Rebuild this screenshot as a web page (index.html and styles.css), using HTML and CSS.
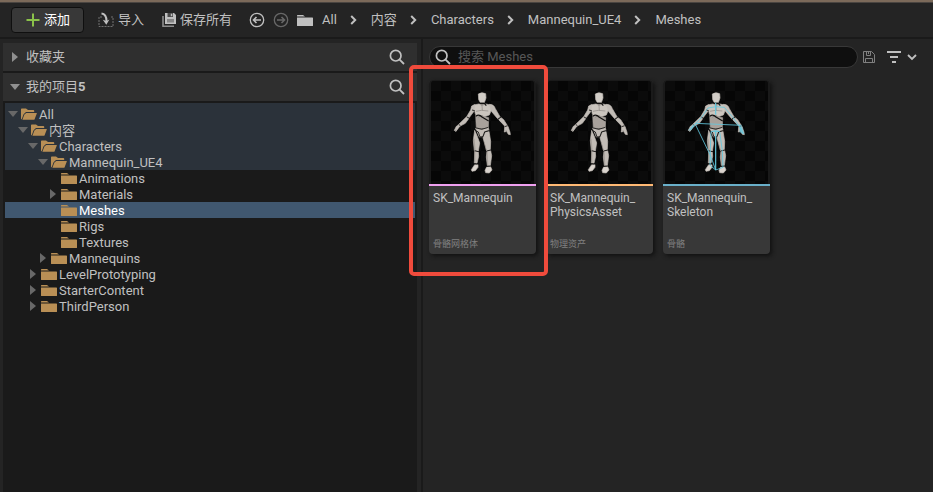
FILE: index.html
```html
<!DOCTYPE html>
<html lang="zh-CN">
<head>
<meta charset="utf-8">
<meta name="viewport" content="width=device-width, initial-scale=1">
<title>Meshes</title>
<link rel="stylesheet" href="styles.css">
</head>
<body>
<svg class="defs" aria-hidden="true">
  <defs>
    <symbol id="folder" viewBox="0 0 16 12"><path d="M0 1.5Q0 1 .6 1H6L8 2.4H0zM0 3.4H15.4Q16 3.4 16 4V11.4Q16 12 15.4 12H.6Q0 12 0 11.4z"/></symbol>
    <symbol id="folder-open" viewBox="0 0 16 12"><path d="M0 1.2Q0 .4.8.4H5L7 2H12.4Q13.2 2 13.2 2.8V4H5L2.6 6.2L.6 11.4Q0 11 0 10.4z"/><path d="M5.3 5H15.6Q16 5 15.8 5.5L13.6 11.3Q13.4 11.8 12.8 11.8H1.4L3.4 6.6z"/></symbol>
    <symbol id="right" viewBox="0 0 10 10"><path d="M2 0L8 5L2 10z"/></symbol>
    <symbol id="down" viewBox="0 0 10 10"><path d="M0 2H10L5 8z"/></symbol>
    <symbol id="chevron" viewBox="0 0 7 10"><path d="M1.2 1L5.2 5L1.2 9" fill="none" stroke="currentColor" stroke-width="2"/></symbol>
    <symbol id="search" viewBox="0 0 16 16"><circle cx="6.7" cy="6.7" r="5.3" fill="none" stroke="currentColor" stroke-width="1.7"/><path d="M10.6 10.6L15 15" stroke="currentColor" stroke-width="1.8"/></symbol>
    <symbol id="arrow-circle" viewBox="0 0 16 16"><g fill="none" stroke="currentColor"><circle cx="8" cy="8" r="6.7" stroke-width="1.3"/><path d="M12 8H5M7.5 5L4.5 8L7.5 11" stroke-width="1.6"/></g></symbol>
    <symbol id="mannequin" viewBox="18 3 309 309">
      <g fill="#c2bcb6" stroke="#c2bcb6" stroke-width="2" stroke-linejoin="round">
        <path fill="#d2cdc7" d="M160 42Q170 35 182 41L183 54L178 68H165L161 58z"/>
        <path fill="#8b8580" stroke="none" d="M164 68H179L184 76H160z"/>
        <path fill="#cbc5be" d="M146 75L161 72L171 77L183 72L196 75L200 88L193 105L178 110L171 106L158 110L151 102L149 91L141 88z"/>
        <path fill="#a8a19b" stroke="#a8a19b" d="M152 105L160 112L171 108L191 113L190 143L172 145L154 143L153 127z"/>
        <path d="M149 74L140 78L137 90L124 112L131 115L147 94zM193 73Q207 73 211 86L225 110L218 116L199 94z"/>
        <path d="M123 112L131 116L121 130L104 139L100 134zM226 111L236 119L248 138L241 140L221 119z"/>
        <path d="M102 134L94 139L88 151L90 153L94 147L92 155L99 146L105 138zM239 139L238 156L241 156L243 151L250 163L256 164L255 157L249 139z"/>
        <path d="M151 144L171 148L190 143L192 151L178 154L172 170L163 171L156 154z"/>
        <path d="M149 151L158 172L164 189L160 213L148 212L145 181zM192 154L180 157L174 173L180 195L185 213L196 209L197 184z"/>
        <path d="M149 214L160 216L161 229L156 250L148 249zM186 214L197 212L200 227L196 257L187 257L184 231z"/>
        <path fill="#dad4ce" d="M149 254L159 254L159 262L151 272L141 274L139 269zM185 261L197 260L201 270L193 279L182 278L180 271z"/>
      </g>
      <path fill="#8a837d" opacity=".45" d="M144 171L149 178L152 212H148zM174 176L181 194L186 212L182 209zM147 215L151 216L151 250H148zM184 215L188 216L190 257H187z"/>
      <g fill="none" stroke="#11100f" stroke-width="2.5">
        <path stroke-width="3.5" d="M160 64L165 70H178L184 77M152 109Q162 101 171 111L191 123"/>
        <path d="M150 143L170 148L190 142M151 151L160 156L165 171L174 170L179 156L192 152M149 212L160 215M148 251L158 252M185 213L197 210M185 259L197 258M126 111L134 115M220 117L229 111M101 133L106 137M239 140L248 137M149 92L141 90"/>
        <path stroke="#77716c" stroke-width="1.5" d="M153 94L169 91L190 93M171 77L172 91"/>
      </g>
    </symbol>
  </defs>
</svg>

<div class="browser">
  <header class="toolbar">
    <button class="tool add" type="button">
      <svg width="14" height="14" viewBox="0 0 14 14" aria-hidden="true"><path d="M7 .5V13.5M.5 7H13.5" stroke="#8bc24a" stroke-width="2"/></svg>添加
    </button>
    <button class="tool import" type="button">
      <svg width="16" height="16" viewBox="0 0 16 16" aria-hidden="true"><path d="M4 5H1V14.5H15V5H12.5" fill="none" stroke="#707070" stroke-width="1" stroke-dasharray="2 1"/><path d="M3.5 1.4Q8.5 2 8.5 9" fill="none" stroke="currentColor" stroke-width="2"/><path d="M4.8 7.8L8.5 9L11.4 7.4L8.3 12.8z" fill="currentColor"/></svg>导入
    </button>
    <button class="tool save" type="button">
      <svg width="14" height="14" viewBox="0 0 14 14" aria-hidden="true"><path d="M1 3V13.2H12" fill="none" stroke="#8c8c8c" stroke-width="1.6"/><path d="M3 0H12L14 2V11H3z" fill="currentColor"/><path d="M5.5 0H11V4H5.5zM5 6.5H12V7.5H5zM5 8.5H12V9.2H5z" fill="#4a4a4a"/><path d="M8.8.7H10.3V3.2H8.8z" fill="currentColor"/></svg>保存所有
    </button>
    <nav class="crumbs" aria-label="路径">
      <button class="icon" type="button" aria-label="后退"><svg width="16" height="16"><use href="#arrow-circle"/></svg></button>
      <button class="icon forward" type="button" aria-label="前进" disabled><svg width="16" height="16"><use href="#arrow-circle"/></svg></button>
      <svg class="solid root" width="16" height="12" aria-hidden="true"><use href="#folder"/></svg>
      <a href="#">All</a><svg class="sep" width="7" height="10"><use href="#chevron"/></svg>
      <a href="#">内容</a><svg class="sep" width="7" height="10"><use href="#chevron"/></svg>
      <a href="#">Characters</a><svg class="sep" width="7" height="10"><use href="#chevron"/></svg>
      <a href="#">Mannequin_UE4</a><svg class="sep" width="7" height="10"><use href="#chevron"/></svg>
      <a href="#">Meshes</a>
    </nav>
  </header>

  <div class="body">
    <aside class="sources">
      <div class="section">
        <button class="toggle" type="button" aria-expanded="false"><svg class="solid" width="10" height="10"><use href="#right"/></svg>收藏夹</button>
        <button class="icon" type="button" aria-label="搜索收藏夹"><svg width="16" height="16"><use href="#search"/></svg></button>
      </div>
      <div class="section">
        <button class="toggle" type="button" aria-expanded="true"><svg class="solid" width="10" height="10"><use href="#down"/></svg><span>我的项目<b>5</b></span></button>
        <button class="icon" type="button" aria-label="搜索项目"><svg width="16" height="16"><use href="#search"/></svg></button>
      </div>
      <ul class="tree">
        <li class="row l0 path first"><svg class="arrow"><use href="#down"/></svg><svg class="dir"><use href="#folder-open"/></svg><span>All</span></li>
        <li class="row l1 path"><svg class="arrow"><use href="#down"/></svg><svg class="dir"><use href="#folder-open"/></svg><span>内容</span></li>
        <li class="row l2 path"><svg class="arrow"><use href="#down"/></svg><svg class="dir"><use href="#folder-open"/></svg><span>Characters</span></li>
        <li class="row l3 path"><svg class="arrow"><use href="#down"/></svg><svg class="dir"><use href="#folder-open"/></svg><span>Mannequin_UE4</span></li>
        <li class="row l4"><svg class="arrow"></svg><svg class="dir"><use href="#folder"/></svg><span>Animations</span></li>
        <li class="row l4"><svg class="arrow"><use href="#right"/></svg><svg class="dir"><use href="#folder"/></svg><span>Materials</span></li>
        <li class="row l4 selected"><svg class="arrow"></svg><svg class="dir"><use href="#folder"/></svg><span>Meshes</span></li>
        <li class="row l4"><svg class="arrow"></svg><svg class="dir"><use href="#folder"/></svg><span>Rigs</span></li>
        <li class="row l4"><svg class="arrow"></svg><svg class="dir"><use href="#folder"/></svg><span>Textures</span></li>
        <li class="row l3"><svg class="arrow"><use href="#right"/></svg><svg class="dir"><use href="#folder"/></svg><span>Mannequins</span></li>
        <li class="row l2"><svg class="arrow"><use href="#right"/></svg><svg class="dir"><use href="#folder"/></svg><span>LevelPrototyping</span></li>
        <li class="row l2"><svg class="arrow"><use href="#right"/></svg><svg class="dir"><use href="#folder"/></svg><span>StarterContent</span></li>
        <li class="row l2"><svg class="arrow"><use href="#right"/></svg><svg class="dir"><use href="#folder"/></svg><span>ThirdPerson</span></li>
      </ul>
    </aside>

    <main class="content">
      <div class="filters">
        <label class="search"><svg width="16" height="16" aria-hidden="true"><use href="#search"/></svg><input type="text" placeholder="搜索 Meshes" aria-label="搜索 Meshes"></label>
        <button class="icon save-search" type="button" aria-label="保存搜索"><svg width="12" height="12" viewBox="0 0 12 12"><path d="M.5.5H8.5L11.5 3.5V11.5H.5zM3.5.5V4.5H7.5V.5M2.5 11.5V7.5H9.5V11.5M5.5 1V3" fill="none" stroke="currentColor" stroke-width="1"/></svg></button>
        <button class="icon filter" type="button" aria-label="过滤器"><svg width="14" height="12" viewBox="0 0 14 12"><path d="M0 1H14M3 6H11M5 11H9" stroke="currentColor" stroke-width="2"/></svg><svg width="10" height="7" viewBox="0 0 10 7"><path d="M1 1L5 5L9 1" fill="none" stroke="currentColor" stroke-width="1.8"/></svg></button>
      </div>
      <div class="assets">
        <article class="card mesh">
          <svg class="thumb" viewBox="0 0 309 309"><use href="#mannequin"/></svg>
          <div class="info"><h2>SK_Mannequin</h2><p>骨骼网格体</p></div>
          <span class="highlight"></span>
        </article>
        <article class="card physics">
          <svg class="thumb" viewBox="0 0 309 309"><use href="#mannequin"/></svg>
          <div class="info"><h2>SK_Mannequin_<wbr>PhysicsAsset</h2><p>物理资产</p></div>
        </article>
        <article class="card skeleton">
          <svg class="thumb" viewBox="18 3 309 309"><use href="#mannequin" x="18" y="3" width="309" height="309"/>
            <g fill="none" stroke="#62c8df" stroke-width="2.5"><path stroke-width="3.5" d="M170 154V270M170 68V104"/><path d="M109 130L248 136M109 133L155 228L170 270M171 80L147 84L128 112L104 137L94 151M171 80L196 82L222 113L243 141L253 162M243 141L244 158M170 152L156 155L154 210L153 256L170 270L192 262L190 212L182 155L170 152M162 154H180"/></g>
            <path fill="#62c8df" opacity=".6" d="M103 133L87 151L94 151L107 139zM240 139L249 139L256 163L247 160z"/>
          </svg>
          <div class="info"><h2>SK_Mannequin_<wbr>Skeleton</h2><p>骨骼</p></div>
        </article>
      </div>
    </main>
  </div>
</div>
</body>
</html>
```
FILE: styles.css
```css
* { box-sizing: border-box; }

body {
  margin: 0;
  background: #242424;
  color: #c0c0c0;
  font: 13px/16px Roboto, "Noto Sans CJK SC", sans-serif;
}

button, input { font: inherit; color: inherit; }

button {
  display: flex;
  align-items: center;
  padding: 0;
  border: 0;
  background: none;
}

svg { display: block; flex: none; }
.defs { position: absolute; width: 0; height: 0; }
.solid { fill: currentColor; }

.browser {
  display: flex;
  flex-direction: column;
  min-height: 100vh;
  border-top: 2px solid #7c6a5a;
}

/* Toolbar */
.toolbar {
  display: flex;
  align-items: center;
  height: 37px;
  padding: 0 11px;
  border-top: 1px solid #4a4541;
  border-bottom: 2px solid #1a1a1a;
}

.tool { gap: 4px; white-space: nowrap; }

.add {
  height: 26px;
  padding: 0 13px 0 14px;
  border: 1px solid #0f0f0f;
  border-radius: 4px;
  background: #383838;
  color: #fff;
}

.import { margin-left: 14px; }
.save { margin-left: 18px; }

.crumbs {
  display: flex;
  align-items: center;
  margin-left: 17px;
  white-space: nowrap;
}

.crumbs a { color: inherit; text-decoration: none; }
.forward { margin-left: 8px; color: #686868; }
.forward svg { transform: scaleX(-1); }
.root { margin: 0 9px 0 8px; }
.sep { margin: 0 14px 0 13px; }

/* Sources panel */
.body { display: flex; flex: 1; }

.sources {
  display: flex;
  flex-direction: column;
  width: 46%;
  max-width: 423px;
  padding: 4px 4px 0 3px;
  border-right: 2px solid #1a1a1a;
}

.section {
  display: flex;
  align-items: center;
  justify-content: space-between;
  height: 30px;
  padding: 0 12px 0 7px;
  border-bottom: 2px solid #1a1a1a;
  background: #2f2f2f;
}

.toggle { gap: 6px; }
.toggle svg { color: #909090; }

.tree {
  flex: 1;
  margin: 0;
  padding: 0 2px;
  list-style: none;
  background: #1a1a1a;
}

.row {
  display: flex;
  align-items: center;
  height: 16px;
}

.row span { padding-top: 2px; }
.first { height: 19px; padding-top: 3px; }
.path { background: #2b323a; }
.selected { background: #40576f; color: #fff; }
.l0 { padding-left: 3px; }
.l1 { padding-left: 13px; }
.l2 { padding-left: 23px; }
.l3 { padding-left: 33px; }
.l4 { padding-left: 43px; }
.arrow { width: 10px; height: 10px; margin-right: 3px; fill: #686868; }
.dir { width: 16px; height: 12px; margin-right: 2px; fill: #b98f55; }

/* Asset view */
.content { flex: 1; min-width: 0; padding: 7px 16px 16px 6px; }

.filters { display: flex; align-items: center; }

.search {
  display: flex;
  flex: 1;
  align-items: center;
  gap: 7px;
  height: 22px;
  padding: 0 5px;
  border: 1px solid #383838;
  border-radius: 11px;
  background: #0f0f0f;
}

.search input {
  flex: 1;
  min-width: 0;
  padding: 0;
  border: 0;
  outline: 0;
  background: none;
}

.search input::placeholder { color: #575757; opacity: 1; }
.save-search { margin-left: 5px; color: #808080; }
.filter { gap: 6px; margin-left: 12px; }

.assets {
  display: flex;
  flex-wrap: wrap;
  gap: 10px;
  margin-top: 12px;
}

.card {
  position: relative;
  width: 107px;
  border-radius: 4px;
  background: #383838;
  box-shadow: 2px 2px 4px #111;
}

.thumb {
  width: 107px;
  height: 104px;
  border: 2px solid #1a1a1a;
  border-width: 1px 2px 0;
  border-radius: 4px 4px 0 0;
  background: repeating-conic-gradient(#060606 0 25%, #0b0b0b 0 50%) 0 0 / 20px 20px;
}

.info {
  display: flex;
  flex-direction: column;
  justify-content: space-between;
  height: 70px;
  padding: 5px 4px 3px;
  border-top: 2px solid;
}

.mesh .info { border-color: #efa0ef; }
.physics .info { border-color: #ffb974; }
.skeleton .info { border-color: #69afc9; }

.info h2 {
  margin: 0;
  font-size: 12px;
  font-weight: 400;
  line-height: 14px;
}

.info p {
  margin: 0;
  color: #808080;
  font-size: 9px;
  line-height: 14px;
}

.highlight {
  position: absolute;
  z-index: 1;
  inset: -15px -12px -22px -20px;
  border: 4px solid #f04b3c;
  border-radius: 5px;
  pointer-events: none;
}
```
